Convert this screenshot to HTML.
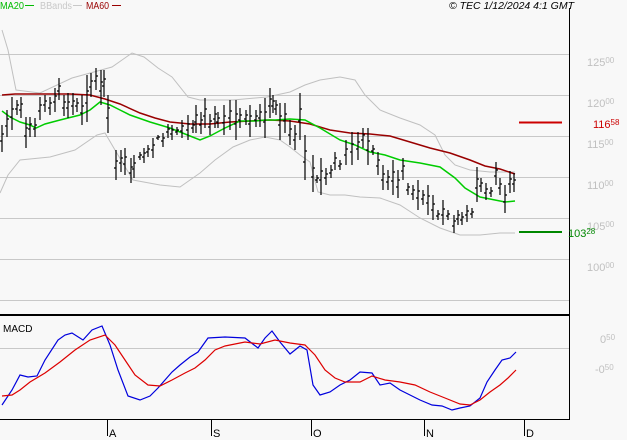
<!DOCTYPE html>
<html><head><meta charset="utf-8"><style>
html,body{margin:0;padding:0;background:#f8f8f8;width:627px;height:440px;overflow:hidden}
svg{display:block}
text{font-family:"Liberation Sans",sans-serif}
</style></head><body>
<svg width="627" height="440" viewBox="0 0 627 440" xmlns="http://www.w3.org/2000/svg">
<rect width="627" height="440" fill="#f8f8f8"/>
<g stroke="#c8c8c8" stroke-width="1">
<line x1="0" y1="54.5" x2="569" y2="54.5"/>
<line x1="0" y1="95.5" x2="569" y2="95.5"/>
<line x1="0" y1="136.5" x2="569" y2="136.5"/>
<line x1="0" y1="177.5" x2="569" y2="177.5"/>
<line x1="0" y1="218.5" x2="569" y2="218.5"/>
<line x1="0" y1="259.5" x2="569" y2="259.5"/>
<line x1="0" y1="300.5" x2="569" y2="300.5"/>
<line x1="0" y1="348.5" x2="569" y2="348.5"/>
</g>
<g stroke="#000" fill="none">
<line x1="569.5" y1="8" x2="569.5" y2="420" stroke-width="1"/>
<line x1="0" y1="315" x2="570" y2="315" stroke-width="2"/>
<line x1="0" y1="419.5" x2="570" y2="419.5" stroke-width="1"/>
<line x1="107.5" y1="419" x2="107.5" y2="436"/>
<line x1="211.5" y1="419" x2="211.5" y2="436"/>
<line x1="311.5" y1="419" x2="311.5" y2="436"/>
<line x1="424.5" y1="419" x2="424.5" y2="436"/>
<line x1="524.5" y1="419" x2="524.5" y2="436"/>
</g>
<g font-size="11" fill="#000">
<text x="109" y="437">A</text><text x="213" y="437">S</text><text x="313" y="437">O</text><text x="426" y="437">N</text><text x="526" y="437">D</text>
<text x="3" y="332" font-size="10">MACD</text>
</g>
<g font-size="11" fill="#c0c0c0">
<text x="587" y="66">125<tspan font-size="8" dy="-3">00</tspan></text>
<text x="587" y="107">120<tspan font-size="8" dy="-3">00</tspan></text>
<text x="587" y="148">115<tspan font-size="8" dy="-3">00</tspan></text>
<text x="587" y="189">110<tspan font-size="8" dy="-3">00</tspan></text>
<text x="587" y="230">105<tspan font-size="8" dy="-3">00</tspan></text>
<text x="587" y="271">100<tspan font-size="8" dy="-3">00</tspan></text>
<text x="600" y="343">0<tspan font-size="8" dy="-3">50</tspan></text>
<text x="595" y="373">-0<tspan font-size="8" dy="-3">50</tspan></text>
</g>
<line x1="519" y1="122.5" x2="562" y2="122.5" stroke="#cc0000" stroke-width="2"/>
<text x="593" y="128" font-size="11" fill="#cc0000">116<tspan font-size="8" dy="-3">58</tspan></text>
<line x1="519" y1="232" x2="562" y2="232" stroke="#008800" stroke-width="2"/>
<text x="568" y="237" font-size="11" fill="#008800">103<tspan font-size="8" dy="-3">28</tspan></text>
<text x="0" y="9" font-size="10" fill="#00bb00" textLength="24" lengthAdjust="spacingAndGlyphs">MA20</text><line x1="25" y1="5.5" x2="34" y2="5.5" stroke="#00bb00"/>
<text x="40" y="9" font-size="10" fill="#c8c8c8" textLength="32" lengthAdjust="spacingAndGlyphs">BBands</text><line x1="73" y1="5.5" x2="82" y2="5.5" stroke="#c8c8c8"/>
<text x="86" y="9" font-size="10" fill="#990000" textLength="23" lengthAdjust="spacingAndGlyphs">MA60</text><line x1="112" y1="5.5" x2="121" y2="5.5" stroke="#990000"/>
<text x="449" y="9" font-size="10" font-style="italic" fill="#000" textLength="125" lengthAdjust="spacingAndGlyphs">© TEC 1/12/2024 4:1 GMT</text>
<g fill="none" stroke="#c0c0c0" stroke-width="1">
<polyline points="2,30 8,50 16,90 40,93 72,78 112,67 132,53 144,57 158,68 172,77 188,97 200,100 233,100 267,97 290,92 305,85 320,80 340,77 355,80 365,95 380,110 400,118 420,125 435,135 445,155 455,165 470,170 490,172 515,172"/>
<polyline points="0,193 8,175 20,160 50,157 75,150 97,135 105,133 115,150 133,180 160,185 180,187 200,173 215,160 233,147 250,140 265,137 280,140 290,147 300,155 310,162 318,192 330,195 345,195 360,197 380,198 400,205 420,218 440,228 460,235 480,235 500,233 515,233"/>
</g>
<polyline fill="none" stroke="#990000" stroke-width="1.5" points="2,95 15,94 30,94 50,94 70,94 90,95 105,99 120,104 140,113 155,118 170,122 190,124 210,124 230,122 250,121 270,120 290,121 310,124 330,130 350,133 370,134 390,136 410,142 430,148 450,153 470,160 485,166 500,169 515,174"/>
<polyline fill="none" stroke="#00cc00" stroke-width="1.5" points="2,111 10,117 20,122 30,125 36,128 45,124 60,120 80,115 90,110 100,102 110,105 120,110 130,115 150,122 170,128 190,136 200,140 210,136 225,128 240,121 255,121 265,120 275,120 290,119 305,120 320,128 340,140 355,145 370,152 385,155 400,160 420,163 440,167 455,178 465,188 480,197 495,200 505,202 515,201"/>
<path fill="none" stroke="#000" stroke-width="1.2" d="M2 125V152M0 141H2M2 134H4M7 110V137M5 126H7M7 119H9M12 97V130M10 117H12M12 109H14M17 100V115M15 109H17M17 105H19M21 97V118M19 110H21M21 104H23M26 117V148M24 136H26M26 128H28M30 117V137M28 129H30M30 124H32M35 118V137M33 129H35M35 125H37M40 97V120M38 111H40M40 105H42M45 95V112M43 105H45M45 101H47M50 97V115M48 108H50M50 103H52M55 88V112M53 102H55M55 96H57M59 78V100M57 91H59M59 86H61M64 95V116M62 108H64M64 102H66M68 93V118M66 108H68M68 102H70M73 93V115M71 106H73M73 101H75M77 98V112M75 106H77M77 103H79M82 95V125M80 113H82M82 106H84M87 75V122M85 103H87M87 91H89M91 73V97M89 87H91M91 81H93M96 68V90M94 81H96M96 76H98M101 70V105M99 91H101M101 82H103M104 70V97M102 86H104M104 79H106M108 95V133M106 118H108M108 108H110M116 150V180M114 168H116M116 161H118M121 150V172M119 163H121M121 158H123M125 148V175M123 164H125M125 157H127M131 158V183M129 173H131M131 167H133M134 155V178M132 169H134M134 163H136M140 152V160M138 157H140M140 155H142M144 148V163M142 157H144M144 153H146M148 145V157M146 152H148M148 149H150M153 138V158M151 150H153M153 145H155M158 135V140M156 138H158M158 137H160M163 133V147M161 141H163M163 138H165M168 124V138M166 132H168M168 129H170M172 125V140M170 134H172M172 130H174M177 127V135M175 132H177M177 130H179M182 120V138M180 131H182M182 126H184M188 115V140M186 130H188M188 124H190M193 120V133M191 128H193M193 125H195M196 105V133M194 122H196M196 115H198M201 112V134M199 125H201M201 120H203M205 98V128M203 116H205M205 109H207M210 114V135M208 127H210M210 121H212M215 106V128M213 119H215M215 114H217M218 112V128M216 122H218M218 118H220M224 105V135M222 123H224M224 116H226M230 100V130M228 118H230M230 111H232M236 100V140M234 124H236M236 114H238M240 108V128M238 120H240M240 115H242M246 110V125M244 119H246M246 115H248M250 105V137M248 124H250M250 116H252M256 110V127M254 120H256M256 116H258M260 104V127M258 118H260M260 112H262M265 98V138M263 122H265M265 112H267M270 88V118M268 106H270M270 99H272M273 95V113M271 106H273M273 101H275M276 100V115M274 109H276M276 105H278M280 103V140M278 125H280M280 116H282M285 103V133M283 121H285M285 114H287M290 120V145M288 135H290M290 129H292M295 125V150M293 140H295M295 134H297M300 93V140M298 121H300M300 109H302M305 135V180M303 162H305M305 151H307M313 155V192M311 177H313M313 168H315M317 175V183M315 180H317M317 178H319M321 158V195M319 180H321M321 171H323M326 168V185M324 178H326M326 174H328M331 165V178M329 173H331M331 170H333M335 152V170M333 163H335M335 158H337M340 160V170M338 166H340M340 164H342M346 140V165M344 155H346M346 149H348M352 132V165M350 152H352M352 144H354M358 132V160M356 149H358M358 142H360M363 128V148M361 140H363M363 135H365M368 128V165M366 150H368M368 141H370M373 145V155M371 151H373M373 149H375M378 152V175M376 166H378M378 160H380M383 165V190M381 180H383M383 174H385M388 170V190M386 182H388M388 177H390M393 160V195M391 181H393M393 172H395M398 170V198M396 187H398M398 180H400M403 158V180M401 171H403M403 166H405M408 183V195M406 190H408M408 187H410M413 185V200M411 194H413M413 190H415M418 180V210M416 198H418M418 191H420M423 190V205M421 199H423M423 195H425M428 185V215M426 203H428M428 196H430M433 195V220M431 210H433M433 204H435M438 210V220M436 216H438M438 214H440M443 200V225M441 215H443M443 209H445M448 210V220M446 216H448M448 214H450M454 215V233M452 226H454M454 221H456M458 210V225M456 219H458M458 215H460M462 212V225M460 220H462M462 217H464M467 205V222M465 215H467M467 211H469M472 208V218M470 214H472M472 212H474M477 167V202M475 188H477M477 179H479M481 178V192M479 186H481M481 183H483M486 183V200M484 193H486M486 189H488M491 187V197M489 193H491M491 191H493M496 162V185M494 176H496M496 170H498M500 178V195M498 188H500M500 184H502M505 185V213M503 202H505M505 195H507M510 171V193M508 184H510M510 179H512M514 173V192M512 184H514M514 180H516"/>
<polyline fill="none" stroke="#0000dd" stroke-width="1.2" points="2,405 12,390 20,375 28,377 37,376 45,360 58,340 65,335 72,333 83,340 92,330 102,326 110,345 118,370 128,396 140,400 150,396 158,388 165,380 172,372 180,365 190,357 198,352 208,338 225,337 245,338 258,348 265,338 272,331 280,342 290,354 300,346 307,350 313,385 320,395 330,392 340,385 350,380 360,372 372,373 380,385 390,383 400,390 410,395 420,400 432,405 442,406 452,410 460,408 470,406 480,398 487,382 495,370 502,360 510,358 516,352"/>
<polyline fill="none" stroke="#dd0000" stroke-width="1.2" points="2,396 12,395 20,390 30,382 45,373 60,362 75,350 90,340 105,335 115,345 125,360 135,375 148,385 160,386 172,380 185,373 195,368 205,360 215,350 225,346 245,342 260,344 275,340 290,343 305,345 315,355 325,370 335,378 345,382 360,382 372,376 385,380 400,382 415,385 430,392 445,398 460,404 470,405 480,400 490,392 500,385 508,378 516,370"/>
</svg>
</body></html>
